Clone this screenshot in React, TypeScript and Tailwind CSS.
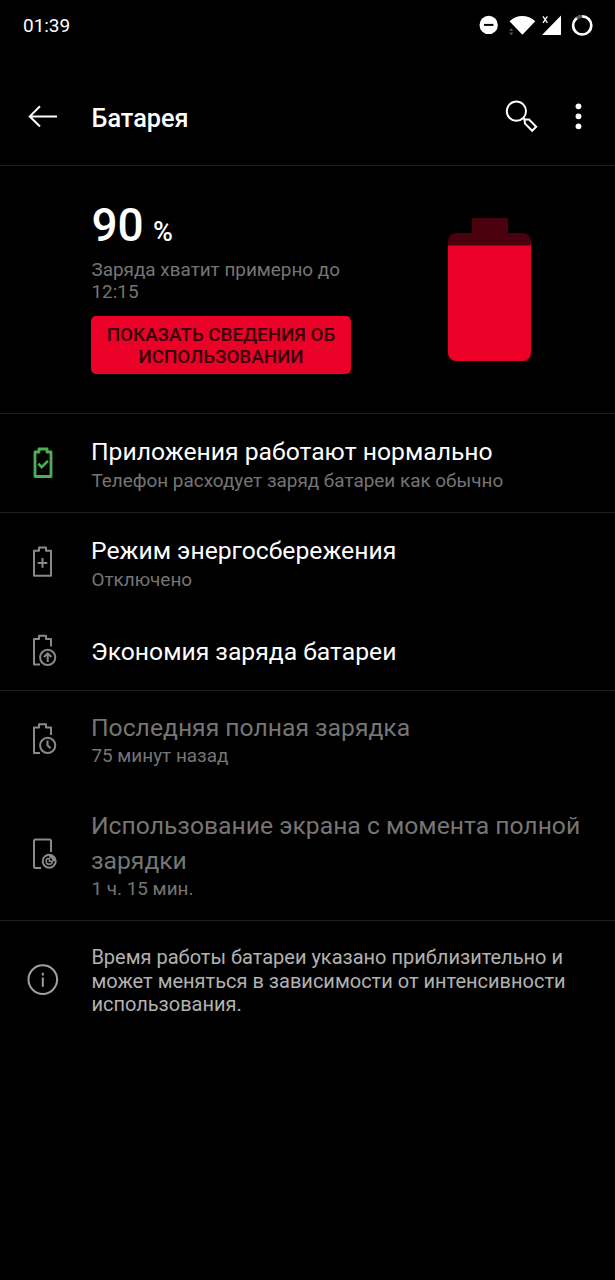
import type { ReactNode } from 'react';

function Icon({ children, className }: { children: ReactNode; className: string }) {
  return (
    <div className="w-[91.4px] shrink-0 pl-[15px]">
      <svg width="60" height="60" viewBox="0 0 60 60" fill="none" stroke="currentColor" strokeWidth="2" className={className}>
        {children}
      </svg>
    </div>
  );
}

function StatusBar() {
  return (
    <div className="flex h-[50px] items-start justify-between text-white">
      <span className="pl-[23px] pt-[13px] text-[19px] leading-[25px] tracking-[-0.05px]">01:39</span>
      <svg width="150" height="50" viewBox="0 0 150 50" fill="none">
        <circle cx="23.7" cy="24.9" r="9.2" fill="#fff" />
        <path d="M19 24.9h9.4" stroke="#000" strokeWidth="2" />
        <path d="M44.5 21.3C51.5 14.3 63 14.3 70.3 21.3L57.4 34.8Z" fill="#fff" />
        <path d="M44 30.8l2.2-2.6 2.2 2.6zM44 32.6h4.4l-2.2 2.6z" fill="#555" />
        <path d="M96 15.5V35H77z" fill="#fff" />
        <path d="M78 16.3l4.4 6.6M82.4 16.3L78 22.9" stroke="#fff" strokeWidth="1.3" />
        <circle cx="117.2" cy="25.4" r="9.1" stroke="#fff" strokeWidth="2.7" />
        <path d="M111.8 18.1a9.1 9.1 0 0 1 5.4-1.8" stroke="#555" strokeWidth="2.9" />
      </svg>
    </div>
  );
}

function AppBar() {
  return (
    <header className="flex h-[116px] items-start border-b border-[#1f1f1f] pt-[35px] text-white">
      <div className="w-[91.5px] shrink-0">
        <svg width="91" height="65" viewBox="0 0 91 65" fill="none" stroke="#fff" strokeWidth="2">
          <path d="M57 31.4H30M40 21.3L29.8 31.4L40 41.5" />
        </svg>
      </div>
      <h1 className="flex-1 pt-[18px] text-[25.3px] font-medium leading-[32px]">Батарея</h1>
      <svg width="125" height="65" viewBox="0 0 125 65" fill="none" stroke="#fff" strokeWidth="2">
        <circle cx="26.4" cy="26.2" r="9.6" />
        <path d="M33 32.8L35.2 35M34.4 34.4L39 34.6L46.2 41.8L42.2 45.8L35 38.6Z" />
        <g fill="#fff" stroke="none">
          <circle cx="88.5" cy="21.3" r="2.9" />
          <circle cx="88.5" cy="31.3" r="2.9" />
          <circle cx="88.5" cy="41.3" r="2.9" />
        </g>
      </svg>
    </header>
  );
}

function Summary() {
  return (
    <section className="flex h-[248px] justify-between border-b border-[#1f1f1f] pl-[91px] pr-[84px]">
      <div className="w-[260px] pt-[33px]">
        <div className="flex h-[52px] items-baseline pl-[0.5px] text-white">
          <span className="text-[46px] font-medium leading-[52px] tracking-[-0.2px]">90</span>
          <span className="ml-[9.5px] text-[27px] font-medium">%</span>
        </div>
        <p className="mt-[8px] whitespace-nowrap pl-[0.5px] text-[18.9px] leading-[22px] text-[#757575]">
          Заряда хватит примерно до
          <br />
          12:15
        </p>
        <button className="mt-[13px] block h-[58px] w-[260px] whitespace-nowrap rounded-[5px] bg-[#eb0028] pt-[2px] text-[18.8px] font-medium leading-[22px] text-[#330009]">
          ПОКАЗАТЬ СВЕДЕНИЯ ОБ
          <br />
          ИСПОЛЬЗОВАНИИ
        </button>
      </div>
      <svg width="83" height="143" viewBox="0 0 83 143" className="mt-[52px]">
        <path d="M24 0H60V15H75a8 8 0 0 1 8 8V28H0V23a8 8 0 0 1 8-8H24Z" fill="#4b000d" />
        <path d="M0 27.5H83V135a8 8 0 0 1-8 8H8a8 8 0 0 1-8-8Z" fill="#eb0028" />
      </svg>
    </section>
  );
}

function RowTitle({ children, dim }: { children: ReactNode; dim?: boolean }) {
  return <h2 className={`-ml-[0.4px] whitespace-nowrap text-[24.7px] leading-[35px] ${dim ? 'text-[#757575]' : 'text-white'}`}>{children}</h2>;
}

function RowNote({ children }: { children: ReactNode }) {
  return <p className="whitespace-nowrap text-[18.92px] leading-[22px] text-[#757575]">{children}</p>;
}

export default function App() {
  return (
    <main className="h-[1280px] w-[615px] overflow-hidden bg-black font-['Roboto',sans-serif]">
      <StatusBar />
      <AppBar />
      <Summary />

      <section className="flex h-[99px] border-b border-[#1f1f1f] pt-[20px]">
        <div className="pt-[1px]">
          <Icon className="text-[#4caf50]">
            <path d="M20 17h4v-3h8v3h4v24.5h-16z" strokeWidth="2.8" strokeLinejoin="round" />
            <path d="M23.4 28.6l3.3 3.6 6.2-6.4" strokeWidth="2.6" />
          </Icon>
        </div>
        <div className="flex flex-col gap-px">
          <RowTitle>Приложения работают нормально</RowTitle>
          <RowNote>Телефон расходует заряд батареи как обычно</RowNote>
        </div>
      </section>

      <section className="h-[178px] border-b border-[#1f1f1f]">
        <div className="flex h-[98px] pt-[20px]">
          <div className="pt-[1px]">
            <Icon className="text-[#8a8a8a]">
              <path d="M19 16.7h5v-3.3h7v3.3h5v25h-17z" strokeLinejoin="round" />
              <path d="M22.7 28.9h9.6M27.5 24.1v9.6" />
            </Icon>
          </div>
          <div className="flex flex-col gap-px">
            <RowTitle>Режим энергосбережения</RowTitle>
            <RowNote>Отключено</RowNote>
          </div>
        </div>
        <div className="flex h-[80px] pt-[12px]">
          <Icon className="text-[#8a8a8a]">
            <path d="M25 41.5h-6V16h5v-3.2h7V16h5v7.5" strokeLinejoin="round" />
            <circle cx="32.7" cy="34.3" r="7.6" />
            <path d="M32.7 39v-8.2M29 34l3.7-3.7L36.4 34" />
          </Icon>
          <div className="pt-[11px]">
            <RowTitle>Экономия заряда батареи</RowTitle>
          </div>
        </div>
      </section>

      <section className="h-[230px] border-b border-[#1f1f1f]">
        <div className="flex h-[98px] pt-[19px]">
          <Icon className="text-[#8a8a8a]">
            <path d="M25 43h-6V17.5h5v-3.2h7v3.2h5v7.5" strokeLinejoin="round" />
            <circle cx="32.7" cy="35.3" r="7.6" />
            <path d="M32.5 30.5v4.8l3 3" />
          </Icon>
          <div>
            <RowTitle dim>Последняя полная зарядка</RowTitle>
            <RowNote>75 минут назад</RowNote>
          </div>
        </div>
        <div className="flex h-[131px] pt-[19px]">
          <div className="pt-[17px]">
            <Icon className="text-[#8a8a8a]">
              <path d="M26 43h-5.5a1.5 1.5 0 0 1-1.5-1.5V16a1.5 1.5 0 0 1 1.5-1.5H34.5a1.5 1.5 0 0 1 1.5 1.5V27" />
              <circle cx="34.2" cy="36.2" r="6.5" />
              <path d="M34.2 29.7V32.8A3.4 3.4 0 0 1 37.4 36.2H40.7A6.5 6.5 0 0 0 34.2 29.7z" fill="currentColor" stroke="none" />
              <path d="M33.6 33.2a3.1 3.1 0 1 0 3.7 3L34.4 36.2V33" strokeWidth="1.5" />
            </Icon>
          </div>
          <div>
            <RowTitle dim>
              Использование экрана с момента полной
              <br />
              зарядки
            </RowTitle>
            <RowNote>1 ч. 15 мин.</RowNote>
          </div>
        </div>
      </section>

      <section className="flex pt-[25px]">
        <div className="pt-[4px]">
          <Icon className="text-[#a0a0a0]">
            <circle cx="27.8" cy="29.6" r="14.3" />
            <path d="M27.8 27.5v9.3M27.8 22.8v2.6" />
          </Icon>
        </div>
        <p className="whitespace-nowrap text-[20px] leading-[23.5px] text-[#b2b2b2]">
          Время работы батареи указано приблизительно и
          <br />
          может меняться в зависимости от интенсивности
          <br />
          использования.
        </p>
      </section>
    </main>
  );
}
